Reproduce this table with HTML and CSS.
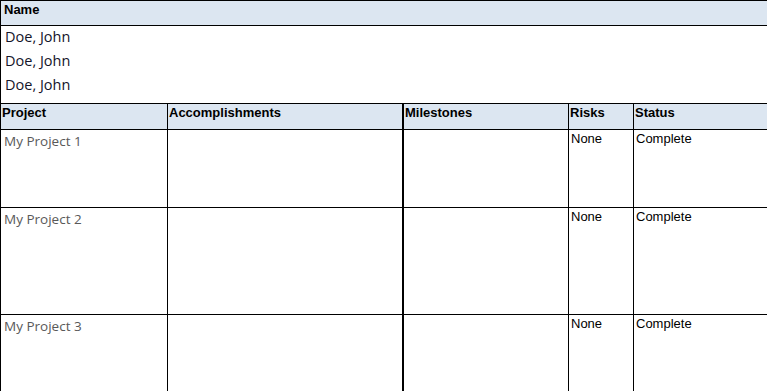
FILE: index.html
```html
<!DOCTYPE html>
<html>
<head>
<meta charset="utf-8">
<link rel="stylesheet" href="styles.css">
</head>
<body>
<div class="names">
  <div class="names-head">Name</div>
  <div class="name-row">Doe, John</div>
  <div class="name-row">Doe, John</div>
  <div class="name-row">Doe, John</div>
</div>
<div class="projects">
  <div class="cell head">Project</div>
  <div class="cell head">Accomplishments</div>
  <div class="cell head thick">Milestones</div>
  <div class="cell head">Risks</div>
  <div class="cell head">Status</div>

  <div class="cell proj r1">My Project 1</div>
  <div class="cell r1"></div>
  <div class="cell r1 thick"></div>
  <div class="cell data r1">None</div>
  <div class="cell data r1">Complete</div>

  <div class="cell proj r2">My Project 2</div>
  <div class="cell r2"></div>
  <div class="cell r2 thick"></div>
  <div class="cell data r2">None</div>
  <div class="cell data r2">Complete</div>

  <div class="cell proj r3">My Project 3</div>
  <div class="cell r3"></div>
  <div class="cell r3 thick"></div>
  <div class="cell data r3">None</div>
  <div class="cell data r3">Complete</div>
</div>
</body>
</html>
```

FILE: styles.css
```css
html, body {
  margin: 0;
  padding: 0;
  background: #ffffff;
  overflow: hidden;
}
body {
  width: 767px;
  height: 391px;
}
.names {
  border-top: 1px solid #000;
  border-left: 1px solid #000;
  height: 103px;
  box-sizing: border-box;
}
.names-head {
  background: #dce6f1;
  border-bottom: 1px solid #000;
  height: 24px;
  box-sizing: content-box;
  font-family: "Liberation Sans", Arial, sans-serif;
  font-weight: bold;
  font-size: 13px;
  color: #000;
  padding-left: 3px;
  line-height: 17px;
}
.name-row {
  font-family: "Open Sans", "Noto Sans", sans-serif;
  font-size: 14.5px;
  color: #14142a;
  padding-left: 4px;
  height: 24px;
  line-height: 22px;
}
.projects {
  display: grid;
  grid-template-columns: 166px 236px 166px 65px 1fr;
  grid-template-rows: 26px 78px 107px 78px;
  border-top: 1px solid #000;
  border-left: 1px solid #000;
}
.cell {
  border-right: 1px solid #000;
  border-bottom: 1px solid #000;
  box-sizing: border-box;
  min-width: 0;
}
.cell:nth-child(5n+1) {
  border-right: none;
}
.cell:nth-child(5n+2) {
  border-left: 1px solid #000;
}
.cell.thick {
  border-left: 1px solid #000;
}
.cell:nth-child(5n) {
  border-right: none;
}
.head {
  background: #dce6f1;
  font-family: "Liberation Sans", Arial, sans-serif;
  font-weight: bold;
  font-size: 13px;
  color: #000;
  padding: 1px 1px 0;
  line-height: 16px;
}
.proj {
  font-family: "Open Sans", "Noto Sans", sans-serif;
  font-size: 13.5px;
  color: #595959;
  padding: 2px 3px;
  line-height: 18px;
}
.data {
  font-family: "Liberation Sans", Arial, sans-serif;
  font-size: 13px;
  color: #000;
  padding: 1px 2px 0;
  line-height: 16px;
}
.r3 {
  border-bottom: none;
}
```
